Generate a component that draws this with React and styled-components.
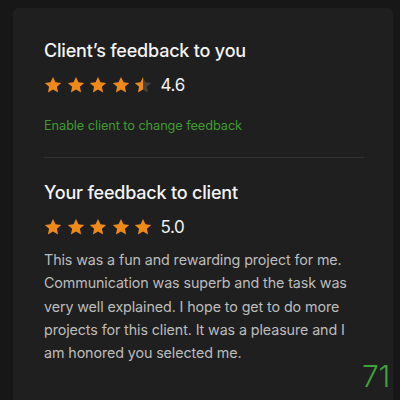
import styled, { createGlobalStyle } from 'styled-components';

const GlobalStyle = createGlobalStyle`
  html, body {
    margin: 0;
    padding: 0;
    background: #171717;
  }
  body {
    font-family: Inter, "Liberation Sans", Arial, sans-serif;
    -webkit-font-smoothing: antialiased;
  }
`;

const Page = styled.div`
  width: 400px;
  height: 400px;
  padding: 8px 7px 0 13px;
  box-sizing: border-box;
  overflow: hidden;
`;

const Card = styled.div`
  background: #1f1f1f;
  border-radius: 6px 6px 0 0;
  height: 400px;
  padding: 31px 29px 0 31px;
  box-sizing: border-box;
  position: relative;
`;

const Section = styled.section`
  padding-bottom: ${props => props.$last ? '0' : '24px'};
`;

const Title = styled.h2`
  margin: 0;
  font-size: 18px;
  font-weight: 500;
  color: #f4f4f4;
  letter-spacing: -0.2px;
  line-height: 24px;
`;

const RatingRow = styled.div`
  display: flex;
  align-items: center;
  margin-top: 11px;
  height: 22px;
`;

const Stars = styled.div`
  display: flex;
  gap: 4.6px;
  margin-right: 8px;
`;

const Score = styled.span`
  font-size: 17px;
  color: #f2f2f2;
  letter-spacing: -0.3px;
`;

const GreenLink = styled.a`
  display: block;
  margin-top: 22px;
  font-size: 12.8px;
  color: #3f9b2f;
  text-decoration: none;
  letter-spacing: -0.1px;
`;

const Divider = styled.hr`
  border: none;
  border-top: 1px solid #333333;
  margin: 0 0 23px 0;
`;

const Comment = styled.p`
  margin: 10px 0 0;
  font-size: 14.3px;
  line-height: 23.3px;
  color: #bcbcbc;
  letter-spacing: -0.1px;
`;

const PageNumber = styled.span`
  position: absolute;
  right: 3px;
  top: 350px;
  font-size: 30px;
  font-weight: 300;
  color: #3ea23a;
  letter-spacing: -0.3px;
`;

const STAR = 'M12 1.4l3.3 7 7.6.8-5.7 5.2 1.6 7.6L12 18.1l-6.8 3.9 1.6-7.6L1.1 9.2l7.6-.8z';

const Star = ({ fill = 1, id }) => (
  <svg width="18" height="18" viewBox="0 0 24 24">
    <defs>
      <linearGradient id={id}>
        <stop offset={fill} stopColor="#ef8a19" />
        <stop offset={fill} stopColor="#434343" />
      </linearGradient>
    </defs>
    <path d={STAR} fill={`url(#${id})`} />
  </svg>
);

const Rating = ({ value, name }) => (
  <RatingRow>
    <Stars>
      {[0, 1, 2, 3, 4].map(i => {
        const f = Math.max(0, Math.min(1, value - i));
        return <Star key={i} id={`${name}-${i}`} fill={f >= 1 ? 1 : f > 0 ? 0.5 : 0} />;
      })}
    </Stars>
    <Score>{value.toFixed(1)}</Score>
  </RatingRow>
);

const App = () => (
  <>
    <GlobalStyle />
    <Page>
      <Card>
        <Section>
          <Title>Client’s feedback to you</Title>
          <Rating value={4.6} name="client" />
          <GreenLink href="#">Enable client to change feedback</GreenLink>
        </Section>
        <Divider />
        <Section $last>
          <Title>Your feedback to client</Title>
          <Rating value={5} name="yours" />
          <Comment>
            This was a fun and rewarding project for me. Communication was superb and the task was
            very well explained. I hope to get to do more projects for this client. It was a pleasure
            and I am honored you selected me.
          </Comment>
        </Section>
        <PageNumber>71</PageNumber>
      </Card>
    </Page>
  </>
);

export default App;
